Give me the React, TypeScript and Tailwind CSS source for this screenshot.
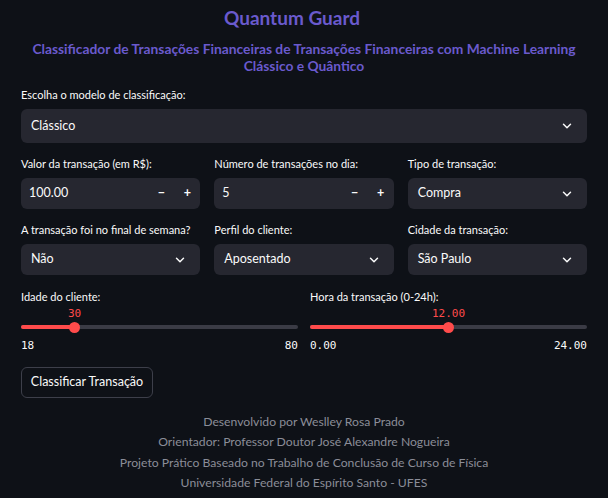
import { ChevronDown } from "lucide-react";

const sans = { fontFamily: "Lato, 'Noto Sans', sans-serif" };

function Select({ value }: { value: string }) {
  return (
    <div className="flex items-center justify-between h-[31px] rounded-md bg-[#262730] pl-[10px] pr-[13px] text-[12.5px] text-[#fafafa]">
      <span>{value}</span>
      <ChevronDown size={14} strokeWidth={2.5} />
    </div>
  );
}

function NumberInput({ value }: { value: string }) {
  return (
    <div className="flex items-center h-[31px] rounded-md bg-[#262730] pl-[8px] text-[12.5px] text-[#fafafa]">
      <span className="flex-1">{value}</span>
      <span className="w-[26px] text-center font-bold">−</span>
      <span className="w-[26px] text-center font-bold">+</span>
    </div>
  );
}

function Field({ label, children }: { label: string; children: React.ReactNode }) {
  return (
    <div className="flex flex-col flex-1 min-w-0">
      <div className="text-[11px] text-[#fafafa] h-[22px] leading-[16px]">{label}</div>
      {children}
    </div>
  );
}

function Slider({
  label,
  value,
  min,
  max,
  pct,
}: {
  label: string;
  value: string;
  min: string;
  max: string;
  pct: number;
}) {
  return (
    <div className="flex flex-col flex-1 min-w-0">
      <div className="text-[11px] text-[#fafafa] leading-[16px]">{label}</div>
      <div className="relative h-[30px]">
        <div className="absolute left-0 right-0 top-[20px] h-[4px] rounded bg-[#3a3b45]" />
        <div
          className="absolute left-0 top-[20px] h-[4px] rounded bg-[#ff4b4b]"
          style={{ width: `${pct}%` }}
        />
        <div
          className="absolute top-[16.5px] w-[11px] h-[11px] -ml-[5.5px] rounded-full bg-[#ff4b4b]"
          style={{ left: `${pct}%` }}
        />
        <div
          className="absolute top-[1px] -translate-x-1/2 text-[11px] text-[#ff4b4b] font-['DejaVu_Sans_Mono',monospace]"
          style={{ left: `${pct}%` }}
        >
          {value}
        </div>
      </div>
      <div className="flex justify-between text-[11px] text-[#fafafa] font-['DejaVu_Sans_Mono',monospace] mt-[3px]">
        <span>{min}</span>
        <span>{max}</span>
      </div>
    </div>
  );
}

export default function App() {
  return (
    <div className="w-[608px] h-[498px] bg-[#0e1117] overflow-hidden px-[21px]" style={sans}>
      <h1 className="text-center text-[19px] font-bold text-[#6a5acd] pt-[6px] pr-[24px] leading-[24px]">
        Quantum Guard
      </h1>
      <p className="text-center text-[13.8px] font-bold text-[#6a5acd] leading-[17px] mt-[10px]">
        Classificador de Transações Financeiras de Transações Financeiras com Machine Learning
        <br />
        Clássico e Quântico
      </p>

      <div className="mt-[13px]">
        <Field label="Escolha o modelo de classificação:">
          <div className="[&>div]:h-[34px]">
            <Select value="Clássico" />
          </div>
        </Field>
      </div>

      <div className="flex gap-[14px] mt-[13px]">
        <Field label="Valor da transação (em R$):">
          <NumberInput value="100.00" />
        </Field>
        <Field label="Número de transações no dia:">
          <NumberInput value="5" />
        </Field>
        <Field label="Tipo de transação:">
          <Select value="Compra" />
        </Field>
      </div>

      <div className="flex gap-[14px] mt-[13px]">
        <Field label="A transação foi no final de semana?">
          <Select value="Não" />
        </Field>
        <Field label="Perfil do cliente:">
          <Select value="Aposentado" />
        </Field>
        <Field label="Cidade da transação:">
          <Select value="São Paulo" />
        </Field>
      </div>

      <div className="flex gap-[12px] mt-[14px]">
        <Slider label="Idade do cliente:" value="30" min="18" max="80" pct={19.35} />
        <Slider label="Hora da transação (0-24h):" value="12.00" min="0.00" max="24.00" pct={50} />
      </div>

      <button className="mt-[12px] h-[31px] w-[132px] rounded-md border border-[#3d3f4a] text-[12.5px] text-[#fafafa]">
        Classificar Transação
      </button>

      <div className="mt-[14px] text-center text-[12.2px] text-[#8b8d98] leading-[20.5px]">
        <div>Desenvolvido por Weslley Rosa Prado</div>
        <div>Orientador: Professor Doutor José Alexandre Nogueira</div>
        <div>Projeto Prático Baseado no Trabalho de Conclusão de Curso de Física</div>
        <div>Universidade Federal do Espírito Santo - UFES</div>
      </div>
    </div>
  );
}
